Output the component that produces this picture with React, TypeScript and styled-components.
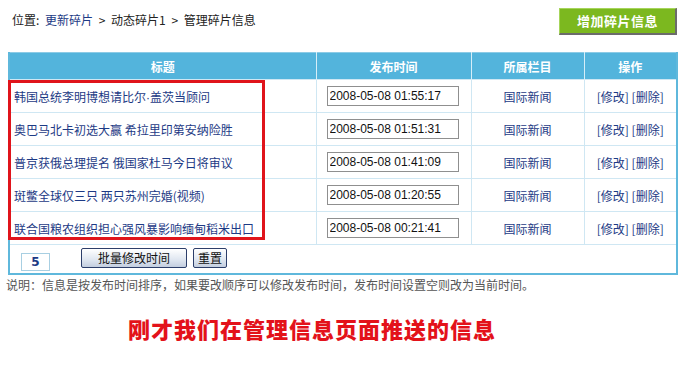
import React from 'react';
import styled, { createGlobalStyle } from 'styled-components';

type Row = { title: string; time: string };

const rows: Row[] = [
  { title: '韩国总统李明博想请比尔·盖茨当顾问', time: '2008-05-08 01:55:17' },
  { title: '奥巴马北卡初选大赢 希拉里印第安纳险胜', time: '2008-05-08 01:51:31' },
  { title: '普京获俄总理提名 俄国家杜马今日将审议', time: '2008-05-08 01:41:09' },
  { title: '斑鳖全球仅三只 两只苏州完婚(视频)', time: '2008-05-08 01:20:55' },
  { title: '联合国粮农组织担心强风暴影响缅甸稻米出口', time: '2008-05-08 00:21:41' },
];

// the middle dot should be narrow, like in the original page
const renderTitle = (title: string) => {
  const parts = title.split('·');
  return parts.map((p, i) => (
    <React.Fragment key={i}>
      {i > 0 && <Dot>·</Dot>}
      {p}
    </React.Fragment>
  ));
};

const App = () => {
  return (
    <Page>
      <GlobalStyle />
      <TopBar>
        <Crumbs>
          位置: <CrumbLink>更新碎片</CrumbLink> &gt; 动态碎片1 &gt; 管理碎片信息
        </Crumbs>
        <AddButton>增加碎片信息</AddButton>
      </TopBar>

      <TableWrap>
        <Table>
          <colgroup>
            <col style={{ width: 307 }} />
            <col style={{ width: 155 }} />
            <col style={{ width: 113 }} />
            <col />
          </colgroup>
          <thead>
            <tr>
              <Th>标题</Th>
              <Th>发布时间</Th>
              <Th>所属栏目</Th>
              <Th>操作</Th>
            </tr>
          </thead>
          <tbody>
            {rows.map((r) => (
              <tr key={r.time}>
                <TitleCell>{renderTitle(r.title)}</TitleCell>
                <Td>
                  <TimeInput defaultValue={r.time} />
                </Td>
                <Td $center>国际新闻</Td>
                <Td $center>[修改] [删除]</Td>
              </tr>
            ))}
            <tr>
              <FootCell colSpan={4}>
                <FootBar>
                  <CountBox>5</CountBox>
                  <GrayButton $wide>批量修改时间</GrayButton>
                  <GrayButton>重置</GrayButton>
                </FootBar>
              </FootCell>
            </tr>
          </tbody>
        </Table>
        {/* highlight box */}
        <Highlight />
      </TableWrap>

      <Note>说明：信息是按发布时间排序，如果要改顺序可以修改发布时间，发布时间设置空则改为当前时间。</Note>

      <Caption>刚才我们在管理信息页面推送的信息</Caption>
    </Page>
  );
};

const GlobalStyle = createGlobalStyle`
  html, body {
    margin: 0;
    padding: 0;
    background: #fff;
  }
  body {
    font-family: "Noto Sans CJK SC", "Liberation Sans", sans-serif;
    font-size: 12px;
    color: #222;
  }
`;

const Page = styled.div`
  width: 688px;
  height: 386px;
  overflow: hidden;
`;

const TopBar = styled.div`
  display: flex;
  align-items: center;
  justify-content: space-between;
  height: 36px;
  padding: 2px 11px 0 12px;
  margin-bottom: 14px;
`;

const Crumbs = styled.div`
  font-size: 12px;
  color: #222;
  margin-top: -2px;
  word-spacing: 3px;
`;

const CrumbLink = styled.span`
  color: #1d3a85;
`;

const Dot = styled.span`
  font-family: "Liberation Sans", sans-serif;
`;

const AddButton = styled.div`
  width: 115px;
  height: 24px;
  margin-top: 2px;
  display: flex;
  align-items: center;
  justify-content: center;
  background: #7cb81f;
  color: #fff;
  font-weight: bold;
  font-size: 13px;
  letter-spacing: 0.5px;
  border-top: 1px solid #a6d55a;
  border-left: 1px solid #a6d55a;
  border-right: 2px solid #6b6b6b;
  border-bottom: 2px solid #6b6b6b;
`;

const TableWrap = styled.div`
  position: relative;
  margin-left: 8px;
  width: 670px;
`;

const Table = styled.table`
  width: 670px;
  border-collapse: collapse;
  table-layout: fixed;
  border: 2px solid #5fb8dc;
  border-top: 1px solid #8ccbe6;
`;

const Th = styled.th`
  height: 26px;
  padding: 0;
  background: #53b4dc;
  color: #fff;
  font-weight: bold;
  font-size: 12px;
  text-align: center;
  border-left: 1px solid #d6eef8;
  &:first-child {
    border-left: none;
  }
`;

const Td = styled.td<{ $center?: boolean }>`
  height: 32px;
  padding: 0;
  border-top: 1px solid #cfe7f3;
  border-left: 1px solid #cfe7f3;
  text-align: ${(p) => (p.$center ? 'center' : 'left')};
  color: #1d3a85;
  font-size: 12px;
  & > input {
    margin-left: 10px;
  }
`;

const TitleCell = styled(Td)`
  padding-left: 4px;
  border-left: none;
  white-space: nowrap;
`;

const TimeInput = styled.input`
  width: 132px;
  height: 20px;
  box-sizing: border-box;
  border: 1px solid #8f8f8f;
  padding: 0 2px;
  font-family: "Liberation Sans", Arial, sans-serif;
  font-size: 12px;
  color: #111;
  background: #fff;
  outline: none;
`;

const FootCell = styled.td`
  height: 28px;
  padding: 0;
  border-top: 1px solid #cfe7f3;
`;

const FootBar = styled.div`
  display: flex;
  align-items: center;
  padding-left: 11px;
  height: 28px;
`;

const CountBox = styled.div`
  width: 27px;
  height: 16px;
  margin-top: 6px;
  margin-right: 31px;
  border: 1px solid #a8cfe2;
  display: flex;
  align-items: center;
  justify-content: center;
  color: #1d3a85;
  font-weight: bold;
  font-family: "DejaVu Sans", sans-serif;
  font-size: 12px;
`;

const GrayButton = styled.div<{ $wide?: boolean }>`
  width: ${(p) => (p.$wide ? '104px' : '32px')};
  height: 18px;
  margin-right: 6px;
  margin-top: -3px;
  display: flex;
  align-items: center;
  justify-content: center;
  border: 1px solid #2c3e6a;
  border-radius: 2px;
  background: linear-gradient(#ffffff, #dfe6f0 60%, #c3cedf);
  color: #111;
  font-size: 12px;
`;

const Highlight = styled.div`
  position: absolute;
  left: 0;
  top: 28px;
  width: 257px;
  height: 160px;
  box-sizing: border-box;
  border: 3px solid #e0141b;
  pointer-events: none;
`;

const Note = styled.div`
  margin: 1px 0 0 6px;
  color: #555;
  font-size: 12px;
`;

const Caption = styled.div`
  margin-top: 19px;
  padding-left: 128px;
  color: #e3121a;
  font-size: 22px;
  font-weight: 900;
  letter-spacing: 1px;
  font-family: "Noto Sans CJK SC", serif;
`;

export default App;
